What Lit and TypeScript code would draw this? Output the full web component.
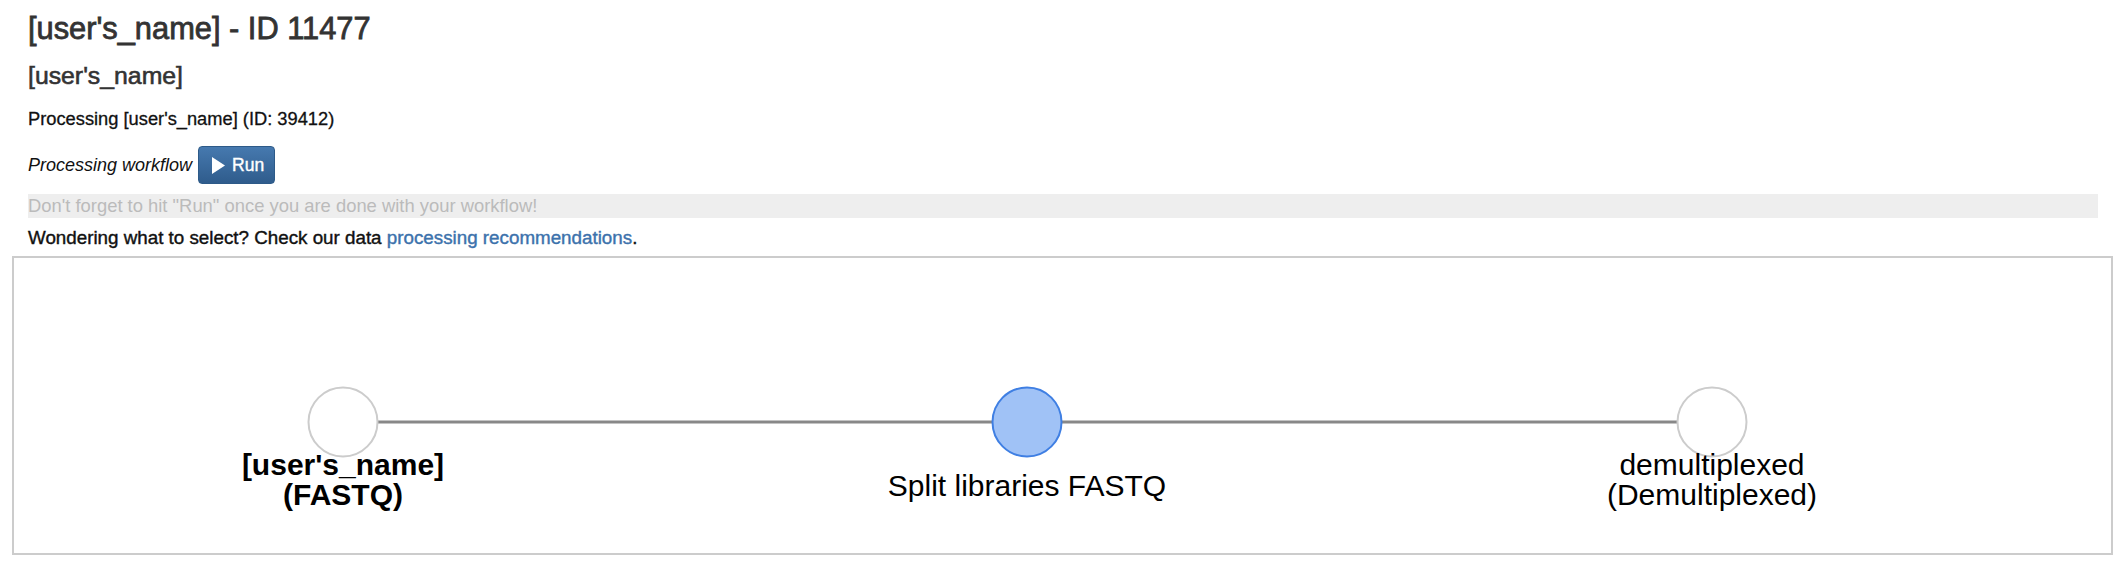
import {LitElement, html, svg, css} from 'lit';
import {customElement, property} from 'lit/decorators.js';

interface WorkflowNode {
  x: number;
  lines: string[];
  baseline: number;
  kind: 'input' | 'job' | 'output';
}

// coordinates are inside the graph box, it is a free canvas
const NODE_Y = 164;
const NODE_R = 34.5;

@customElement('app-root')
export class AppRoot extends LitElement {
  @property({type: Array}) nodes: WorkflowNode[] = [
    {x: 329, lines: ["[user's_name]", '(FASTQ)'], baseline: 217, kind: 'input'},
    {x: 1013, lines: ['Split libraries FASTQ'], baseline: 238, kind: 'job'},
    {x: 1698, lines: ['demultiplexed', '(Demultiplexed)'], baseline: 217, kind: 'output'},
  ];

  static styles = css`
    :host {
      display: block;
      height: 566px;
      background: #fff;
      color: #333;
      font-family: 'Liberation Sans', Arial, sans-serif;
      font-size: 18.3px;
    }

    .page {
      padding: 0 30px 0 28px;
    }

    h2 {
      margin: 0;
      padding-top: 12px;
      font-size: 30.8px;
      line-height: 34px;
      font-weight: 500;
      -webkit-text-stroke: 0.8px #333;
    }

    h3 {
      margin: 0;
      padding-top: 15px;
      font-size: 24.8px;
      line-height: 30px;
      font-weight: 500;
      -webkit-text-stroke: 0.6px #333;
    }

    .processing {
      padding-top: 16px;
      line-height: 24px;
      color: #111;
      -webkit-text-stroke: 0.3px #111;
    }

    .workflow {
      display: flex;
      align-items: center;
      gap: 6px;
      height: 38px;
      margin-top: 15px;
      font-size: 18px;
      color: #111;
    }

    .run {
      display: flex;
      align-items: center;
      gap: 7px;
      box-sizing: border-box;
      width: 77px;
      height: 38px;
      padding: 0 0 0 13px;
      border: 1px solid #2d5a88;
      border-radius: 4px;
      background: linear-gradient(#4679af, #2f5c8c);
      color: #fff;
      font: 400 17.5px 'Liberation Sans', Arial, sans-serif;
      -webkit-text-stroke: 0.4px #fff;
    }

    .hint {
      height: 24px;
      margin-top: 10px;
      font-size: 18.4px;
      line-height: 24px;
      background: #eee;
      color: #bbb;
    }

    .help {
      padding-top: 8px;
      font-size: 18.8px;
      line-height: 23px;
      color: #111;
      -webkit-text-stroke: 0.4px #111;
    }

    .help a {
      color: #3c72ac;
      -webkit-text-stroke: 0.4px #3c72ac;
      text-decoration: none;
    }

    .graph {
      box-sizing: border-box;
      height: 299px;
      margin: 7px -15px 0 -16px;
      border: 2px solid #ccc;
    }

    .graph svg {
      display: block;
      width: 100%;
      height: 100%;
    }

    .edge {
      stroke: #888;
      stroke-width: 3;
    }

    .node {
      fill: #fff;
      stroke: #ccc;
      stroke-width: 2;
    }

    .node.job {
      fill: #a0c2f6;
      stroke: #3f7fe3;
    }

    .label {
      font-size: 30px;
      text-anchor: middle;
      fill: #000;
    }

    .label.input {
      font-weight: 700;
    }
  `;

  renderNode(node: WorkflowNode) {
    return svg`
      <circle class="node ${node.kind}" cx=${node.x} cy=${NODE_Y} r=${NODE_R}></circle>
      ${node.lines.map(
        (line, index) => svg`
          <text class="label ${node.kind}" x=${node.x} y=${node.baseline + index * 29.5}>${line}</text>
        `
      )}
    `;
  }

  render() {
    const first = this.nodes[0];
    const last = this.nodes[this.nodes.length - 1];
    return html`
      <div class="page">
        <h2>[user's_name] - ID 11477</h2>
        <h3>[user's_name]</h3>
        <div class="processing">Processing [user's_name] (ID: 39412)</div>
        <div class="workflow">
          <i>Processing workflow</i>
          <button class="run">
            <svg width="13" height="17" viewBox="0 0 13 17"><path d="M0 0L13 8.5L0 17Z" fill="#fff"></path></svg>
            Run
          </button>
        </div>
        <div class="hint">Don't forget to hit "Run" once you are done with your workflow!</div>
        <div class="help">Wondering what to select? Check our data <a href="#">processing recommendations</a>.</div>
        <div class="graph">
          <svg>
            <line class="edge" x1=${first.x} y1=${NODE_Y} x2=${last.x} y2=${NODE_Y}></line>
            ${this.nodes.map((node) => this.renderNode(node))}
          </svg>
        </div>
      </div>
    `;
  }
}
